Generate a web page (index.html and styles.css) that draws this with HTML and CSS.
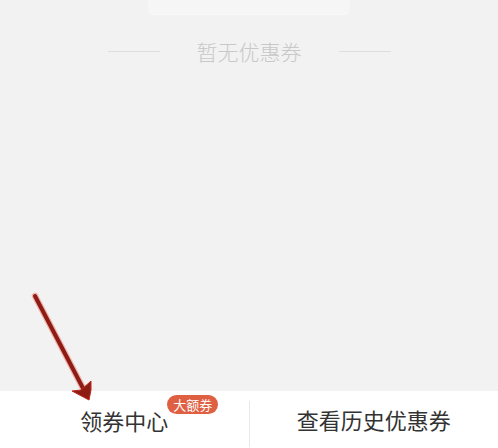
FILE: index.html
```html
<!DOCTYPE html>
<html lang="zh-CN">
<head>
  <meta charset="UTF-8">
  <title>优惠券</title>
  <link rel="stylesheet" href="styles.css">
</head>
<body>

<div class="page">
  <div class="main">
    <div class="topCard"></div>
    <div class="empty">
      <span class="line"></span>
      <span class="emptyText">暂无优惠券</span>
      <span class="line"></span>
    </div>
  </div>

  <div class="tabbar">
    <div class="tab">
      <span class="tabText">领券中心<em class="badge">大额券</em></span>
    </div>
    <div class="tab">
      <span class="tabText">查看历史优惠券</span>
    </div>
  </div>

  <!-- 标注箭头 -->
  <svg class="arrow" width="498" height="448" viewBox="0 0 498 448">
    <line x1="35" y1="296" x2="86" y2="394" stroke="#f04030" stroke-width="6.5" stroke-linecap="round" opacity="0.35"/>
    <line x1="35" y1="296" x2="86" y2="394" stroke="#8c1c14" stroke-width="4" stroke-linecap="round"/>
    <polygon points="89,400 72,391 81,390 91,381 91,390" fill="#8c1c14" stroke="#c0281c" stroke-width="1"/>
  </svg>
</div>

</body>
</html>
```

FILE: styles.css
```css
* { margin: 0; padding: 0; }
body { background: #f2f2f2;
  font-family: "Noto Sans CJK SC", "Noto Sans", sans-serif; }
.page { width: 498px; height: 448px; position: relative;
  overflow: hidden; display: flex; flex-direction: column; }

.main { height: 391px; display: flex; flex-direction: column;
  align-items: center; }
.topCard { width: 202px; height: 14px; background: #f6f6f6;
  border-radius: 0 0 6px 6px; border-bottom: 1px solid #f9f9f9; }
.empty { display: flex; align-items: center; gap: 37px;
  margin-top: 21px; }
.empty .line { width: 52px; height: 1px; background: #dedede; }
.emptyText { font-size: 21px; color: #c8c8c8; line-height: 30px;
  font-weight: 300; }

.tabbar { height: 57px; background: #fff; display: flex;
  align-items: center; }
.tab { flex: 1; display: flex; justify-content: center;
  align-items: center; height: 100%; }
.tab + .tab { border-left: 1px solid #e8e8e8; height: 44px;
  margin-top: 10px; align-self: flex-start; padding-bottom: 2px; }
.tabText { font-size: 22px; color: #333; position: relative;
  line-height: 30px; }
.tab + .tab .tabText { margin-top: -8px; }
.badge { position: absolute; left: 87px; top: -10px;
  font-style: normal; font-size: 13px; line-height: 19px;
  color: #fff; background: #df5f42; border-radius: 10px;
  padding: 0 6px; white-space: nowrap; }

.arrow { position: absolute; left: 0; top: 0; }
```
